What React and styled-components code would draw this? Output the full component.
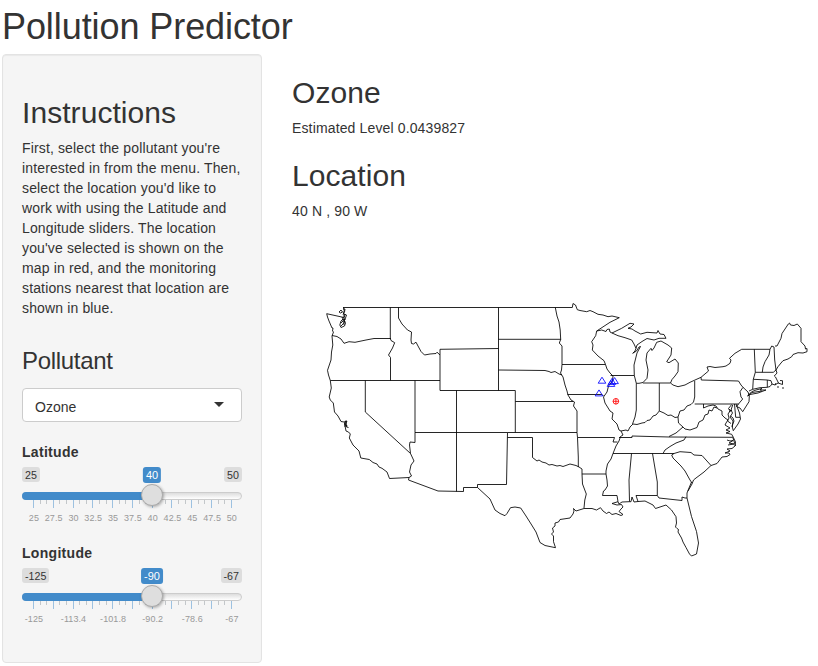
import React from "react";
import styled, { createGlobalStyle } from "styled-components";

const GlobalStyle = createGlobalStyle`
  * { box-sizing: border-box; }
  body {
    margin: 0;
    background: #fff;
    color: #333;
    font: 14px/20px "Liberation Sans", Arial, sans-serif;
    overflow: hidden;
  }
`;

const Page = styled.div`
  padding: 7px 0 0 2px;
  height: 666px;
`;
const Title = styled.h1`
  margin: 0 0 7px;
  font-size: 36px;
  line-height: 40px;
  font-weight: 400;
  letter-spacing: -0.08px;
`;
const Columns = styled.div`
  display: grid;
  grid-template-columns: 260px 1fr;
  column-gap: 30px;
`;
const Sidebar = styled.aside`
  height: 609px;
  padding: 41px 19px 0;
  background: #f5f5f5;
  border: 1px solid #e3e3e3;
  border-radius: 4px;
  box-shadow: inset 0 1px 1px rgba(0, 0, 0, 0.05);
`;
const Heading = styled.h2`
  margin: 0 0 9px;
  font-size: 30px;
  line-height: 33px;
  font-weight: 400;
  letter-spacing: 0.06px;
`;
const SubHeading = styled.h3`
  margin: 30px 0 14px;
  font-size: 24px;
  line-height: 26px;
  font-weight: 400;
  letter-spacing: -0.3px;
`;
const Text = styled.p`
  margin: 0;
  white-space: pre-line;
  letter-spacing: 0.14px;
`;
const Select = styled.div`
  display: flex;
  align-items: center;
  justify-content: space-between;
  height: 34px;
  padding: 3px 17px 0 12px;
  background: #fff;
  border: 1px solid #ccc;
  border-radius: 4px;
`;
const Caret = styled.span`
  border: 5px solid transparent;
  border-top-color: #333;
  border-bottom: 0;
  margin-top: -4px;
`;
const SliderGroup = styled.section`
  height: 81px;
  margin-top: 20px;
`;
const SliderName = styled.div`
  font-weight: 700;
  letter-spacing: 0.3px;
  margin-bottom: 5px;
`;
const Limits = styled.div`
  display: flex;
  justify-content: space-between;
  position: relative;
  height: 15px;
  margin-bottom: 10px;
`;
const Badge = styled.span`
  padding: 0 3px;
  height: 15px;
  font-size: 10.7px;
  line-height: 16px;
  background: #ddd;
  border-radius: 3px;
`;
const ValueBadge = styled(Badge)`
  position: absolute;
  left: 130px;
  transform: translateX(-50%);
  height: 16px;
  font-size: 11px;
  background: #428bca;
  color: #fff;
`;
const Track = styled.div`
  position: relative;
  height: 8px;
  border: 1px solid #ccc;
  border-radius: 8px;
  background: linear-gradient(#ddd, #fff);
`;
const Fill = styled.div`
  width: 130px;
  height: 8px;
  margin: -1px;
  background: #428bca;
  border-radius: 8px 0 0 8px;
`;
const Handle = styled.span`
  position: absolute;
  z-index: 1;
  left: 118px;
  top: -9px;
  width: 22px;
  height: 22px;
  border: 1px solid #ababab;
  border-radius: 50%;
  background: #dedede;
  box-shadow: 1px 1px 3px rgba(0, 0, 0, 0.3);
`;
const Ticks = styled.div`
  display: flex;
  justify-content: space-between;
  padding: 0 10px 0 11px;
  height: 8px;
`;
const Tick = styled.i`
  width: 1px;
  height: ${(p) => (p.$major ? 8 : 4)}px;
  background: ${(p) => (p.$major ? "#9dc1e0" : "#c3c7ca")};
`;
const Scale = styled.div`
  display: flex;
  margin: 5px 0 0 2px;
  font-size: 9px;
  line-height: 11px;
  letter-spacing: 0.08px;
  color: #999;
`;
const ScaleLabel = styled.span`
  display: flex;
  justify-content: center;
  flex: 0 0 19.8px;
  min-width: 0;
  white-space: nowrap;
  & > b { flex: none; font-weight: 400; }
`;
const Main = styled.main`
  padding-top: 22px;
`;
const Reading = styled.section`
  height: 83px;
`;
const MapView = styled.svg`
  display: block;
  width: 526px;
  height: 340px;
  fill: none;
  stroke: #000;
  stroke-width: 0.85;
  stroke-linejoin: round;
`;

const borders = [
  // northern line and the Pacific coast
  "M343 307.5H572.3L573 303.5L575.5 305L577.3 309.7L580 310.5L586.7 311.7L590 310.5L593 311.7L598 314.3L603 315L608 316.7L612 316L619.3 317.7L610 322.3L596.7 331",
  "M343.5 307.5L344.3 311L343 313L345 315L344 317.5L326.7 313.7L327.5 317L329 321L332 328L333 328L332.5 331L333.5 332L332 336L332.8 345L331.5 352L331 360L327.5 370.3L328.5 375L330.3 380.5L331.3 388L329.2 397L330.3 400L333.3 403L334.5 412L338 416L341 421.5L344 422L346.5 421L344.5 423L346 431L348.5 432L350.3 434L349.3 438L353 445L359 451L360.8 458L369.3 459.5L373 462.5L377 464L379 467L382 468.3L387 472L389.5 478.5L409 477.5",
  "M345 422V427M346 420.5L346.5 427L348.5 427.5M347 421L345 425L347.5 426",
  "M339 312L341 310L342.5 312L340.5 313ZM343 309L345 309L344.5 312L343 315M344.5 314L346.5 315L345.5 318L344 320L345.5 323L344.5 326L341 327.5L339.8 325L341 321L343 319L342 317M341 323L343 321L345 321L343 324L341 326M344 315L344 325M342 320L346 319",
  // Columbia River, Oregon, Idaho and Montana
  "M332 335.5L337 336.5L341 339L344 343.3L349 341.7L355 342.3L366 340L374 338.5H391",
  "M390.3 307.5V338.5L391 340.5L394.7 342.7L392.5 348L388.5 355L390.5 357.5V380.5",
  "M398.5 307.5V318L402 324L407.5 330L411.5 332L411 340L411.5 343.5L413.5 344L416 342.2L418 346L421 351.5L424.5 355L430 354L436 353.5L437 352.2L440 355",
  "M330.3 380.5H440M440 349.3V390.5H515.3V432.5M440 349.3L498.5 348.5",
  "M365.3 380.5V412L410.5 453.5M415 380.5V432.5H507.5M415 432.5V442.5L410 442L409.5 445L410.5 453.5L414 461L411 465L409.5 472L411.5 476L409 477.5L408.5 480L438 491L463.5 491.5V487.5H477.5V484.5H506.5L507.5 432.5H577",
  "M456.5 390.5V491.5M498.5 307.5V390.5M498.5 339.3H561M515.3 401.5H573",
  "M498.5 370L545 370.5L549 371.5L551 372.5L555 371.5L559 374L562 375",
  "M555.3 307.5L557 316L559 322L560.2 330L560.7 339.5L559.3 343L562 346V364.5L561.5 370L560.5 373L563 377L565 385L567 391L568 395L571 400L574.5 402L573.5 406L577 411V432.5L577.5 437.5L578.3 457V467",
  "M562 364.5H605.5M567.5 394.5H602L603.5 396",
  // Texas and the Gulf coast
  "M507.5 437.5H532.5V457.5L537 461L539 460L542 462L546 463L549 465L552 464.5L557 466L560 465.5L563 466.5L570 464L576 465.5L579 467L582 469V474L582.5 484L586.3 494L584.8 500L584 508",
  "M477.5 487.5L490 499L495 510L500 513.5L505 515.7L507 513.5L510.5 507.7L515 507L520.7 508L526 516L531.7 525L536 532L540 542.5L545 545.5L555.5 547.7L553.5 541.7L553.5 536L551.5 534L553.5 532L552.5 528L555 526L555 523L558.5 522L560 519.5L570 518L573 514L574 511L573.5 508.5L576 511L584 508.5L592 508.5L596.5 510L600.5 507.7L603 511L606.5 513.5L609 512L612 514.5L616 513.5L621 515.5L623 514.5L619 511.5L621 509L623 507L621.5 504.5L617 505L612 503.5L618 501.7L619 504L622 502L629 501.7H631L632 497L634 502L638 501.5L645 501L653 505L655.5 508.5L660 507L666 505L671.5 510L676 516.7L676.5 523L675.5 527L677 528.5L678.5 529.5L678 532L681.5 538L683 542L686 547.5L689.5 554L691.5 556L696.5 554L698.5 543L696.5 531.5L691.5 516.5L687 498L687 493L689 488L691.5 482",
  "M577.5 437.5H614.5L613 442H617.5M582 474H606",
  // Minnesota and Wisconsin down the Mississippi
  "M596.7 331L595.7 335.7L591.7 341.7L593 345L592.3 350L598 356L604 360.7L605.5 364.5L607 369L610 373L613 376L612.5 381L608.5 386L607 392L603.5 397L605 403L610 411L613 413L612 419L617 424L619 430L621 431L623 435L620.5 436.5L619 441L616 446L613 453.5L611 459L607.5 464L606 471V474L607 480L607.5 486L605 490L603.5 491L602.5 495.5H617L618 501.7",
  "M610.5 375.5H634.3",
  "M596.7 331L601.7 330L606 331.5L607 329.5L609.3 329L610 332L612 333L621.7 328.3L630 323.3L634 324L631 327L628 328.3L632 329L635 331L640.7 334L647 332.3L657 333L658 330.5L660 334L664 334.5L666 338.3H659L654 340L647 338.5L642 341.5L637 345L636 348.3",
  "M612 333L618 335.7L625 337.7L631.7 340L634 344L636 348.3L635 351L632.7 353.3L636.5 351L639 347L640.5 346.5L637 353L634 365L634.3 375.5L636.3 383.3H639L643 382.5L647 378.3L648 370L646 360L647 353L651 348.3L652 350.5L654 348L656.7 342.3L661 341L668 345L671.7 348L671 355L666.7 361.7L669 362.7L675 359L678.3 363L678 371.7L675 376L672 379.5L670.5 383",
  "M643 383H670.5L673 385L678 386.7L685 385L690 382.3L695 380L701 377.3",
  // Ohio valley
  "M636.3 383.3V410L635 417L632.5 424M659.3 383V411M621 431L626 430L628 431L630 427L633 424L637 424.5L642 423L645 422.5L647 420.5L650 420L653 416L656 415L659.3 411L664 413L668 415.5L671 415L675 417.5L678 417L680 411L684 410L687 406L691 404.5L693.5 402L694.7 397V381",
  "M678 417L678.5 423L683 427L676 433L669 436.5M683 427L685 429L690 430L697 427.5L699 422L703 420L705 415L708 414L709 410L712 411L714 407L717 408",
  "M619 437.5H632V436L669 437L733.3 437.3M686 436.7L684 440L676 443L670 446.5L665 450L663 453.5",
  "M613 453.5H674L680 451.7L691 452.5L694 455L702 455.5L711 465.5M674 453.5L671.7 455L673 458L681 466L685 471L690 480L692 483",
  "M631.5 453.5L629 480L629.5 501.5M652.5 453.5L657.3 482V495.5H636L638 501.5M657.3 495.5L659 498L682 500.5V497L685 498L687 498",
  // Atlantic coast
  "M711 465.5L704 472L696 478L693.5 480L692 484L688 491M711 465.5L717 463.5L722 457L727 456.5L730 454.5L729 453L725 453L730 451L727 449L732 448.5L735 446L735.5 442L733.3 437.3M727 440L730 441L733 440.5L729 443L734 444L728 445M733 438L735.5 446",
  "M694.7 404H738.5M703.5 404V408L708 406L713 405L716 406L718 409L722 411L722 415L725 418L728 420L726 423L725 425L730 428L726 430L730 431.5L726 433L731.7 434.3L733.3 437.3",
  "M731.7 404.5L728.5 408.5L730 411L728 414L729 418L727.5 421L731 423.5M732.7 405L731 410L732.5 413L730 417L733 421L732.3 427M734.5 404L735.7 417.3H740M736 404L739.5 413L740.5 419L738 424L733.3 430.7L732 426L734 421L733 418L730.5 416M729 409L731 411M729 412L732 410",
  "M738.5 404L736.5 406.5L740 408L742.7 411.7L745 408L749 401.7L749.3 396L748 392L743 387.3",
  "M701 377.3L701.3 380L738.5 381L741 385L743 387.3L740 391.7L741 397L742.7 399L738.5 404",
  "M701 377.3L708.5 371L707 367L710 366.5L715 367.5L723 366.7L726 366L730 363.3L731 360L729.5 358.3L735 353.3L741.7 349.3H770L771.7 346",
  "M754.3 349.3L755.3 372.3L753.3 379.3L752.7 389.3L749 391M770 349.3L769 355L765 361.7L763 367L762.3 372.3M755.3 372.3H773.3L776 370",
  "M753.3 379.3L767.3 380L771 380.7L772 384M767.3 380V387.3M752.7 389.3L760 387.7L767.3 387.3L770 386.5L772 384L775 385L778 383L782.5 384.5L782.5 380.7L780 380.5M775 385L776 383M777 387H779M782 388H784M778.5 383L775.5 377L774.3 376L777 373L776 370",
  "M771.7 346L774 347L774.7 360L776 370L778 366.7L781 363L783 360.7L788 359L791.7 356.7L793 354.5L798 352.7L803 353L807 351.7V348.5L805.5 349L805 346L801 341.7V328.3L797.3 324L794 325.5L790.5 325L789.5 323L788.3 324L782 333.5L781 338.3L777 346L775 346",
  "M747.7 395.7L751.7 391.7L756 390L762 388.5L760 390L766 390L758 393L750 394.5L747.7 396L752 392.5L762 391",
];
const stations = [
  [602, 377.2],
  [614.6, 377.6],
  [612, 378.4],
  [611, 380.4],
  [599, 389.9],
];

function USMap() {
  return (
    <MapView viewBox="292 242 526 340">
      {borders.map((d) => <path key={d} d={d} />)}
      <g stroke="#00f">
        {stations.map(([x, y]) => (
          <path key={x} d={`M${x} ${y}l3.8 6h-7.6z`} />
        ))}
      </g>
      <path stroke="#f00" d="M612.9 401.3h6M615.9 398.3v6M613.1 401.3a2.8 2.8 0 1 0 5.6 0a2.8 2.8 0 1 0-5.6 0" />
    </MapView>
  );
}

const tickIndexes = Array.from({ length: 31 }, (_, i) => i);

function Slider({ name, min, max, value, labels }) {
  return (
    <SliderGroup>
      <SliderName>{name}</SliderName>
      <Limits>
        <Badge>{min}</Badge>
        <ValueBadge>{value}</ValueBadge>
        <Badge>{max}</Badge>
      </Limits>
      <Track><Fill /><Handle /></Track>
      <Ticks>{tickIndexes.map((i) => <Tick key={i} $major={i % 3 === 0} />)}</Ticks>
      <Scale>
        {labels.map((label, i) => <ScaleLabel key={i}><b>{label}</b></ScaleLabel>)}
      </Scale>
    </SliderGroup>
  );
}

const instructions = `First, select the pollutant you're
interested in from the menu. Then,
select the location you'd like to
work with using the Latitude and
Longitude sliders. The location
you've selected is shown on the
map in red, and the monitoring
stations nearest that location are
shown in blue.`;

export default function App() {
  return (
    <Page>
      <GlobalStyle />
      <Title>Pollution Predictor</Title>
      <Columns>
        <Sidebar>
          <Heading>Instructions</Heading>
          <Text>{instructions}</Text>
          <SubHeading>Pollutant</SubHeading>
          <Select>Ozone<Caret /></Select>
          <Slider
            name="Latitude" min="25" max="50" value="40"
            labels={["25", "27.5", "30", "32.5", "35", "37.5", "40", "42.5", "45", "47.5", "50"]}
          />
          <Slider
            name="Longitude" min="-125" max="-67" value="-90"
            labels={["-125", "", "-113.4", "", "-101.8", "", "-90.2", "", "-78.6", "", "-67"]}
          />
        </Sidebar>
        <Main>
          <Reading>
            <Heading>Ozone</Heading>
            <Text>Estimated Level 0.0439827</Text>
          </Reading>
          <Reading>
            <Heading>Location</Heading>
            <Text>40 N , 90 W</Text>
          </Reading>
          <USMap />
        </Main>
      </Columns>
    </Page>
  );
}
